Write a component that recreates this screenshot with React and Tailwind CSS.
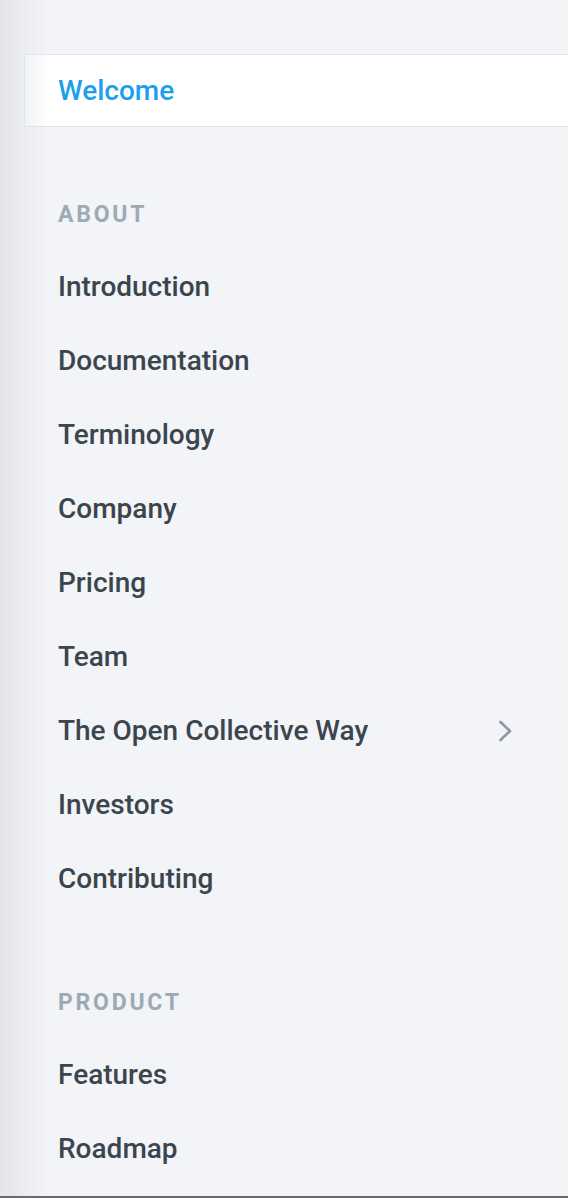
import React from 'react';

const about = [
  'Introduction',
  'Documentation',
  'Terminology',
  'Company',
  'Pricing',
  'Team',
  'The Open Collective Way',
  'Investors',
  'Contributing',
];

const product = ['Features', 'Roadmap'];

function NavItem({ label, chevron }) {
  return (
    <div className="flex items-center justify-between h-[74px] pl-[58px] pr-[56px]">
      <span className="text-[28px] font-medium text-[#3b454e]">{label}</span>
      {chevron && (
        <svg width="14" height="22" viewBox="0 0 14 22" fill="none">
          <path d="M2.5 2l9.5 9-9.5 9" stroke="#8d99a5" strokeWidth="2.6" strokeLinecap="round" strokeLinejoin="round" />
        </svg>
      )}
    </div>
  );
}

function SectionTitle({ children }) {
  return (
    <div className="pl-[58px] text-[23px] font-bold tracking-[0.12em] text-[#9daab6] uppercase leading-none">
      {children}
    </div>
  );
}

export default function App() {
  return (
    <div className="relative w-[568px] h-[1198px] overflow-hidden bg-[#f2f4f7] font-['Roboto',sans-serif] border-b-2 border-[#6a6b6d]">
      {/* left edge shadow */}
      <div className="pointer-events-none absolute inset-y-0 left-0 w-[48px] z-10 bg-gradient-to-r from-[#e3e5e9] to-transparent"></div>

      <div className="pt-[54px]">
        <div className="ml-[24px] h-[73px] flex items-center pl-[33px] bg-white border border-r-0 border-[#dfe5ec]">
          <span className="text-[28px] font-medium text-[#1d9fee]">Welcome</span>
        </div>

        <div className="mt-[76px]">
          <SectionTitle>About</SectionTitle>
        </div>
        <div className="mt-[24px]">
          {about.map((a) => (
            <NavItem key={a} label={a} chevron={a === 'The Open Collective Way'} />
          ))}
        </div>

        <div className="mt-[75px]">
          <SectionTitle>Product</SectionTitle>
        </div>
        <div className="mt-[24px]">
          {product.map((p) => (
            <NavItem key={p} label={p} />
          ))}
        </div>
      </div>

      {/* bottom fade */}
      <div className="pointer-events-none absolute inset-x-0 bottom-0 h-[36px] bg-gradient-to-b from-transparent to-[#f2f4f7]/70"></div>
    </div>
  );
}
